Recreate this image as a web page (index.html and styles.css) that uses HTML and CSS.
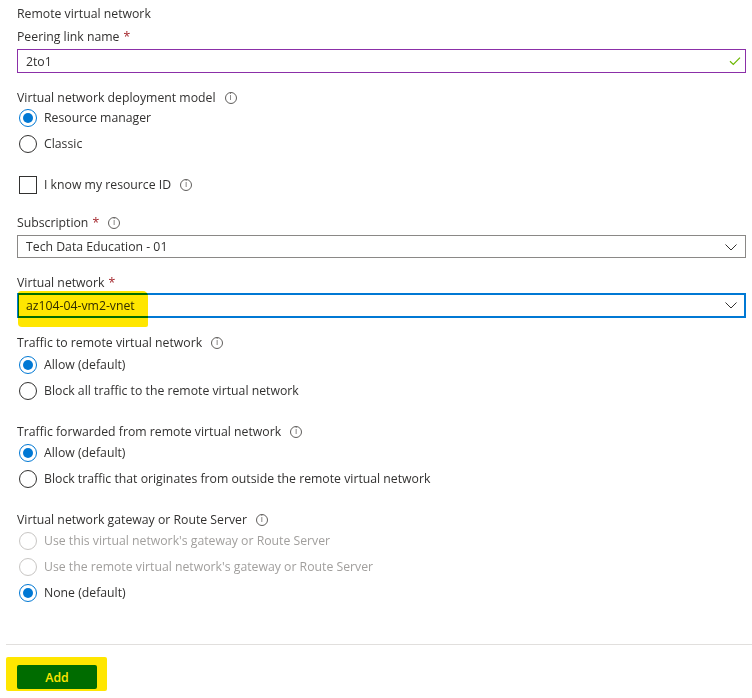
FILE: index.html
```html
<!DOCTYPE html>
<html>
<head>
<meta charset="utf-8">
<link rel="stylesheet" href="styles.css">
</head>
<body>
<div class="form">
  <div class="title">Remote virtual network</div>
  <div class="label lbl-peer">Peering link name <span class="req">*</span></div>
  <div class="input valid">
    <span>2to1</span>
    <svg class="check" width="12" height="10" viewBox="0 0 12 10"><path d="M1 5.2 L4.3 8.4 L11 1.6" fill="none" stroke="#6bb700" stroke-width="1.2"/></svg>
  </div>

  <div class="label lbl-model">Virtual network deployment model <span class="info">i</span></div>
  <div class="radio checked r-first">Resource manager</div>
  <div class="radio">Classic</div>

  <div class="checkbox"><span class="box"></span>I know my resource ID <span class="info">i</span></div>

  <div class="label lbl-sub">Subscription <span class="req">*</span> <span class="info">i</span></div>
  <div class="select">
    <span>Tech Data Education - 01</span>
    <svg class="chev" width="12" height="7" viewBox="0 0 12 7"><path d="M0.5 0.5 L6 6 L11.5 0.5" fill="none" stroke="#323130" stroke-width="1"/></svg>
  </div>

  <div class="label lbl-vnet">Virtual network <span class="req">*</span></div>
  <div class="select focus">
    <span>az104-04-vm2-vnet</span>
    <svg class="chev" width="12" height="7" viewBox="0 0 12 7"><path d="M0.5 0.5 L6 6 L11.5 0.5" fill="none" stroke="#323130" stroke-width="1"/></svg>
    <span class="marker vnet-mark"></span>
  </div>

  <div class="label lbl-traffic">Traffic to remote virtual network <span class="info">i</span></div>
  <div class="radio checked r-first2">Allow (default)</div>
  <div class="radio">Block all traffic to the remote virtual network</div>

  <div class="label lbl-fwd">Traffic forwarded from remote virtual network <span class="info">i</span></div>
  <div class="radio checked r-first3">Allow (default)</div>
  <div class="radio">Block traffic that originates from outside the remote virtual network</div>

  <div class="label lbl-gw">Virtual network gateway or Route Server <span class="info">i</span></div>
  <div class="radio disabled r-first4">Use this virtual network's gateway or Route Server</div>
  <div class="radio disabled">Use the remote virtual network's gateway or Route Server</div>
  <div class="radio checked">None (default)</div>
</div>

<div class="footer">
  <button class="add">Add</button>
  <span class="marker add-mark"></span>
</div>
</body>
</html>
```

FILE: styles.css
```css
html, body {
  margin: 0;
  padding: 0;
  background: #ffffff;
}
body {
  font-family: "Open Sans", "Noto Sans", sans-serif;
  font-size: 12.25px;
  color: #323130;
  width: 752px;
  height: 698px;
  overflow: hidden;
  position: relative;
}
.form {
  padding: 4px 6px 0 17px;
}
.title, .label, .radio, .checkbox {
  height: 20px;
  line-height: 20px;
  white-space: nowrap;
}
.label {
  display: flex;
  align-items: center;
}
.req {
  color: #a4262c;
  margin-left: 4px;
}
.info {
  display: inline-flex;
  align-items: center;
  justify-content: center;
  width: 10px;
  height: 10px;
  border: 1px solid #605e5c;
  border-radius: 50%;
  font-size: 8px;
  line-height: 10px;
  color: #605e5c;
  margin-left: 9px;
  font-family: "DejaVu Sans", sans-serif;
}
.lbl-peer { margin-top: 3px; }
.input, .select {
  position: relative;
  display: flex;
  align-items: center;
  box-sizing: border-box;
  border: 1px solid #8a8886;
  padding: 0 8px;
}
.input {
  margin-top: 2px;
  height: 24px;
}
.input.valid {
  border-color: #8b2fa8;
}
.check {
  position: absolute;
  right: 4px;
  top: 6px;
}
.lbl-model { margin-top: 15px; }
.radio {
  position: relative;
  padding-left: 27px;
  margin-top: 6px;
}
.radio::before {
  content: "";
  position: absolute;
  left: 2px;
  top: 1px;
  width: 18px;
  height: 18px;
  box-sizing: border-box;
  border: 1px solid #323130;
  border-radius: 50%;
}
.radio.checked::before {
  border-color: #0078d4;
}
.radio.checked::after {
  content: "";
  position: absolute;
  left: 6px;
  top: 5px;
  width: 10px;
  height: 10px;
  border-radius: 50%;
  background: #0078d4;
}
.radio.disabled {
  color: #a19f9d;
}
.radio.disabled::before {
  border-color: #c8c6c4;
}
.r-first { margin-top: 0; }
.r-first2 { margin-top: 2px; }
.r-first3 { margin-top: 1px; }
.r-first4 { margin-top: 1px; }
.checkbox {
  margin-top: 21px;
  display: flex;
  align-items: center;
}
.box {
  width: 18px;
  height: 18px;
  box-sizing: border-box;
  border: 1px solid #323130;
  margin-left: 2px;
  margin-right: 7px;
}
.lbl-sub { margin-top: 18px; }
.select {
  margin-top: 2px;
  height: 23px;
}
.chev {
  position: absolute;
  right: 8px;
  top: 8px;
}
.lbl-vnet { margin-top: 15px; }
.select.focus {
  margin-top: 0;
  height: 25px;
  border: 2px solid #0078d4;
  padding-left: 7px;
}
.select.focus .chev {
  right: 7px;
  top: 7px;
}
.lbl-traffic { margin-top: 15px; }
.lbl-fwd { margin-top: 21px; }
.lbl-gw { margin-top: 21px; }
.footer {
  position: relative;
  margin: 41px 0 0 6px;
  border-top: 1px solid #e1dfdd;
  padding: 20px 0 0 11px;
}
.add {
  display: block;
  width: 80px;
  height: 24px;
  border: none;
  border-radius: 2px;
  background: #0078d4;
  color: #ffffff;
  font-family: "Open Sans", "Noto Sans", sans-serif;
  font-size: 12.25px;
  font-weight: 600;
  padding: 0;
}
.marker {
  position: absolute;
  background: #ffe600;
  mix-blend-mode: multiply;
  pointer-events: none;
}
.vnet-mark {
  left: -1px;
  top: -4px;
  width: 130px;
  height: 36px;
  border-radius: 3px 5px 2px 4px;
}
.add-mark {
  left: 0;
  top: 12px;
  width: 101px;
  height: 34px;
  border-radius: 2px;
}
```
